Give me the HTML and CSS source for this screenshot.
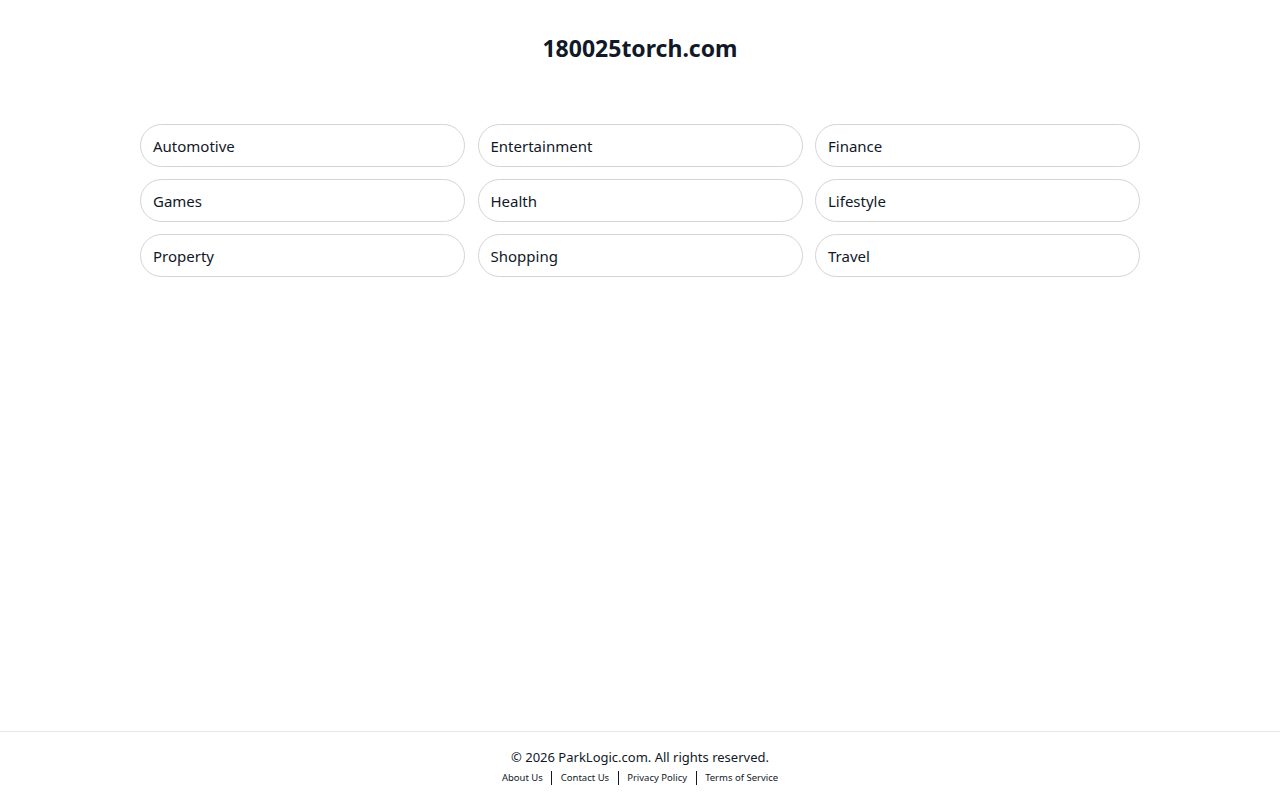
FILE: index.html
```html
<!DOCTYPE html>
<html lang="en">
<head>
<meta charset="utf-8">
<title>180025torch.com</title>
<link rel="stylesheet" href="styles.css">
</head>
<body>
<div class="page">
  <header class="header">
    <h1 class="title">180025torch.com</h1>
  </header>
  <main class="main">
    <div class="grid">
      <a class="pill" href="#">Automotive</a>
      <a class="pill" href="#">Entertainment</a>
      <a class="pill" href="#">Finance</a>
      <a class="pill" href="#">Games</a>
      <a class="pill" href="#">Health</a>
      <a class="pill" href="#">Lifestyle</a>
      <a class="pill" href="#">Property</a>
      <a class="pill" href="#">Shopping</a>
      <a class="pill" href="#">Travel</a>
    </div>
  </main>
  <footer class="footer">
    <p class="copy">© 2026 ParkLogic.com. All rights reserved.</p>
    <nav class="links">
      <a href="#">About Us</a>
      <a href="#">Contact Us</a>
      <a href="#">Privacy Policy</a>
      <a href="#">Terms of Service</a>
    </nav>
  </footer>
</div>
</body>
</html>
```

FILE: styles.css
```css
html, body {
  margin: 0;
  padding: 0;
  background: #ffffff;
}
body {
  font-family: "Noto Sans", "Open Sans", "Liberation Sans", sans-serif;
  color: #111827;
}
.page {
  min-height: 800px;
  display: flex;
  flex-direction: column;
}
.header {
  padding-top: 32px;
  text-align: center;
}
.title {
  margin: 0;
  font-size: 23px;
  line-height: 32px;
  font-weight: 700;
  color: #111827;
}
.main {
  flex: 1;
  padding-top: 60px;
}
.grid {
  width: 1000px;
  margin: 0 auto;
  display: grid;
  grid-template-columns: repeat(3, 1fr);
  column-gap: 12.5px;
  row-gap: 12px;
}
.pill {
  box-sizing: border-box;
  height: 43px;
  display: flex;
  align-items: center;
  padding: 0 12px;
  border: 1px solid #d4d4d8;
  border-radius: 22px;
  font-size: 15px;
  color: #111827;
  text-decoration: none;
}
.footer {
  border-top: 1px solid #e5e7eb;
  height: 69px;
  box-sizing: border-box;
  padding-top: 15px;
  text-align: center;
}
.copy {
  margin: 0;
  font-size: 13px;
  line-height: 20px;
  color: #111827;
}
.links {
  display: flex;
  justify-content: center;
  align-items: center;
  margin-top: 4px;
}
.links a {
  font-size: 9.5px;
  line-height: 14px;
  color: #111827;
  text-decoration: none;
  padding: 0 8.5px;
  border-left: 1px solid #111827;
}
.links a:first-child {
  border-left: none;
}
```
